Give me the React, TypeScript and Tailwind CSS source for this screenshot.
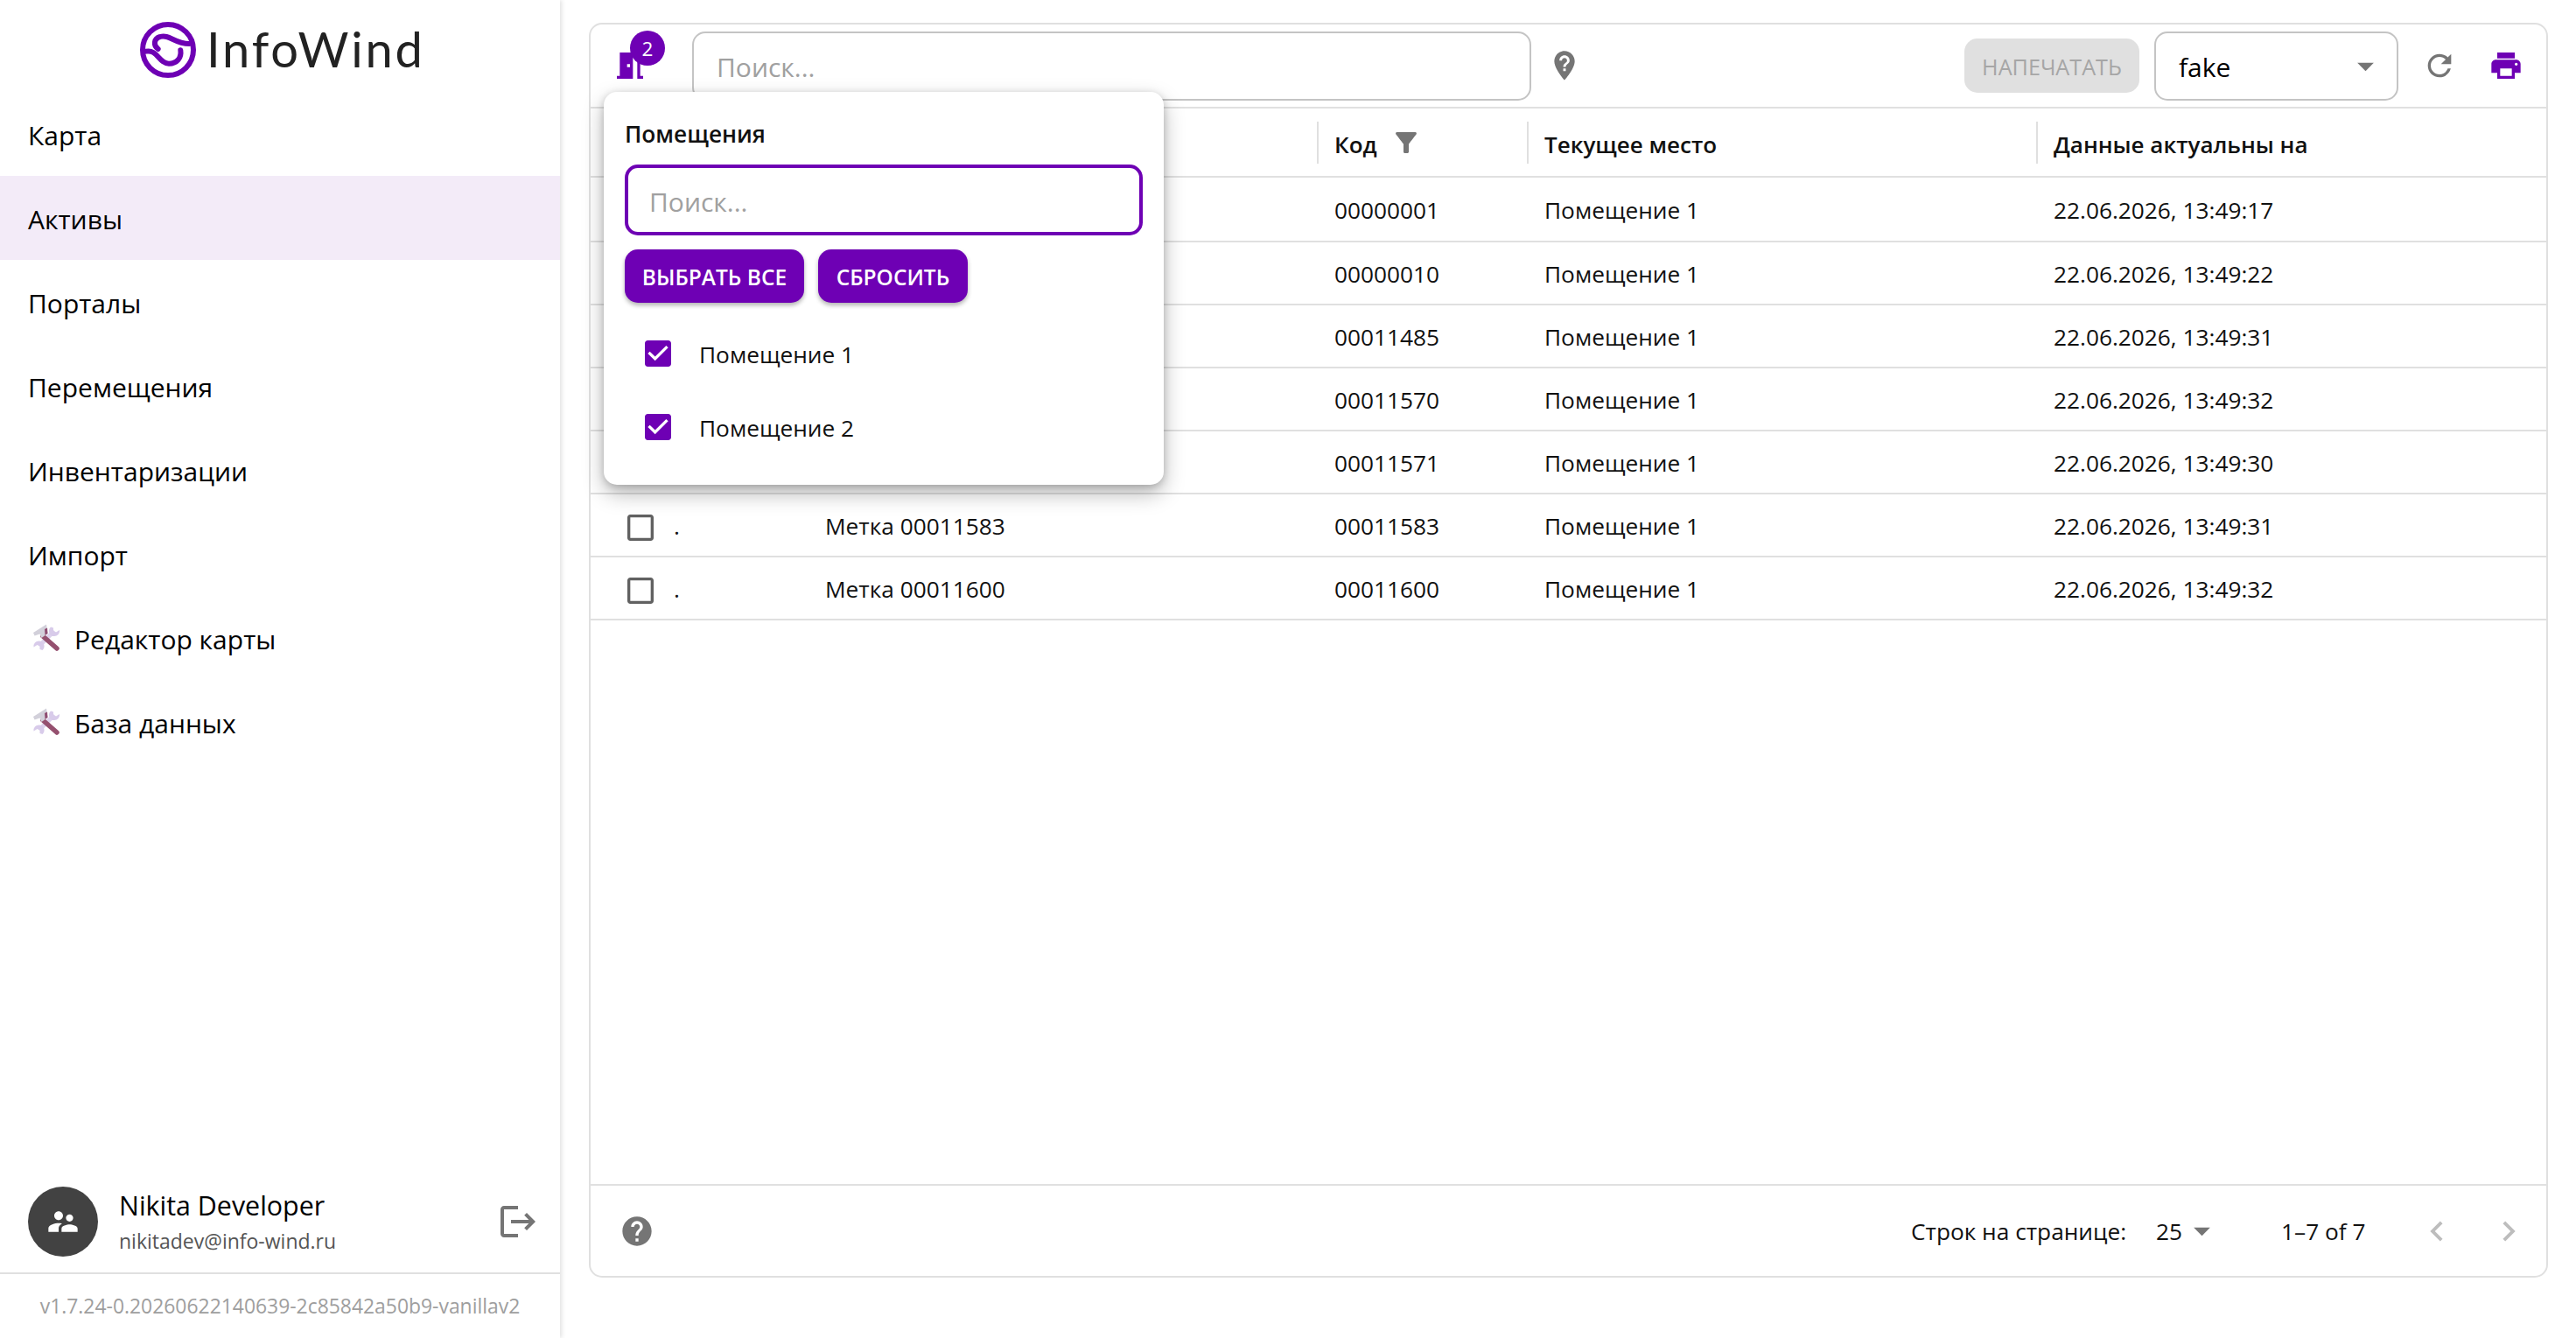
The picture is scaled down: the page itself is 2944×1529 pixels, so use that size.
import React from 'react';

const PURPLE = '#6e00b4';

const Icon = ({ d, size = 40, color = '#757575' }: { d: string; size?: number; color?: string }) => (
  <svg width={size} height={size} viewBox="0 0 24 24" fill={color} className="shrink-0">
    <path d={d} />
  </svg>
);

const paths = {
  door: 'M14 6v15H3v-2h2V3h9v1h5v15h2v2h-4V6h-3zm-4 5v2h2v-2h-2z',
  pin: 'M12 2C8.14 2 5 5.14 5 9c0 5.25 7 13 7 13s7-7.75 7-13c0-3.86-3.14-7-7-7zm.88 13.75h-1.75V14h1.75v1.75zm0-2.87h-1.75c0-2.84 2.62-2.62 2.62-4.38 0-.96-.79-1.75-1.75-1.75s-1.75.79-1.75 1.75H8.5C8.5 6.57 10.07 5 12 5s3.5 1.57 3.5 3.5c0 2.19-2.62 2.41-2.62 4.38z',
  refresh: 'M17.65 6.35C16.2 4.9 14.21 4 12 4c-4.42 0-7.99 3.58-7.99 8s3.57 8 7.99 8c3.73 0 6.84-2.55 7.73-6h-2.08c-.82 2.33-3.04 4-5.65 4-3.31 0-6-2.69-6-6s2.69-6 6-6c1.66 0 3.14.69 4.22 1.78L13 11h7V4l-2.35 2.35z',
  print: 'M19 8H5c-1.66 0-3 1.34-3 3v6h4v4h12v-4h4v-6c0-1.66-1.34-3-3-3zm-3 11H8v-5h8v5zm3-7c-.55 0-1-.45-1-1s.45-1 1-1 1 .45 1 1-.45 1-1 1zm-1-9H6v4h12V3z',
  filter: 'M4.25 5.61C6.27 8.2 10 13 10 13v6c0 .55.45 1 1 1h2c.55 0 1-.45 1-1v-6s3.72-4.8 5.74-7.39c.51-.66.04-1.61-.79-1.61H5.04c-.83 0-1.3.95-.79 1.61z',
  help: 'M12 2C6.48 2 2 6.48 2 12s4.48 10 10 10 10-4.48 10-10S17.52 2 12 2zm1 17h-2v-2h2v2zm2.07-7.75l-.9.92C13.45 12.9 13 13.5 13 15h-2v-.5c0-1.1.45-2.1 1.17-2.83l1.24-1.26c.37-.36.59-.86.59-1.41 0-1.1-.9-2-2-2s-2 .9-2 2H8c0-2.21 1.79-4 4-4s4 1.79 4 4c0 .88-.36 1.68-.93 2.25z',
  logout: 'M17 7l-1.41 1.41L18.17 11H8v2h10.17l-2.58 2.58L17 17l5-5zM4 5h8V3H4c-1.1 0-2 .9-2 2v14c0 1.1.9 2 2 2h8v-2H4V5z',
  people: 'M16.5 12c1.38 0 2.49-1.12 2.49-2.5S17.88 7 16.5 7C15.12 7 14 8.12 14 9.5s1.12 2.5 2.5 2.5zM9 11c1.66 0 2.99-1.34 2.99-3S10.66 5 9 5C7.34 5 6 6.34 6 8s1.34 3 3 3zm7.5 3c-1.83 0-5.5.92-5.5 2.75V19h11v-2.25c0-1.83-3.67-2.75-5.5-2.75zM9 13c-2.33 0-7 1.17-7 3.5V19h7v-2.25c0-.85.33-2.34 2.37-3.47C10.5 13.1 9.66 13 9 13z',
  drop: 'M7 10l5 5 5-5z',
  left: 'M15.41 7.41 14 6l-6 6 6 6 1.41-1.41L10.83 12z',
  right: 'M10 6 8.59 7.41 13.17 12l-4.58 4.59L10 18l6-6z',
  checked: 'M19 3H5c-1.11 0-2 .9-2 2v14c0 1.1.89 2 2 2h14c1.1 0 2-.9 2-2V5c0-1.1-.9-2-2-2zm-9 14l-5-5 1.41-1.41L10 14.17l7.59-7.59L19 8l-9 9z',
  unchecked: 'M19 5v14H5V5h14m0-2H5c-1.1 0-2 .9-2 2v14c0 1.1.9 2 2 2h14c1.1 0 2-.9 2-2V5c0-1.1-.9-2-2-2z',
};

const LogoMark = () => (
  <svg width="66" height="66" viewBox="0 0 198 198" fill="none" stroke={PURPLE} strokeWidth="18" className="shrink-0">
    <circle cx="99" cy="99" r="87" />
    <path d="M65 96 C48 84 50 60 72 54 C104 44 120 78 172 78" strokeLinecap="round" />
    <path d="M24 104 C62 96 68 146 102 146 C130 146 146 126 142 100" strokeLinecap="round" />
  </svg>
);

const Tools = () => (
  <svg width="32" height="32" viewBox="0 0 32 32" className="shrink-0">
    <path d="M25 8 L8 25" stroke="#ddd2ec" strokeWidth="5" />
    <path d="M21 3.5 a6 6 0 0 0 4 10.5 a6 6 0 0 0 6 -7 l-4 2.5 -3-1.5 0-3.5 z" fill="#d8cbea" />
    <path d="M11.5 30 a6 6 0 0 0 -4-10.5 a6 6 0 0 0 -6 7 l4-2.5 3 1.5 0 3.5 z" fill="#d8cbea" />
    <path d="M12 14 L28 28" stroke="#95506f" strokeWidth="5.5" strokeLinecap="round" />
    <path d="M1 10 L16 0.5 L17.5 11 L10.5 16 L8.5 11.5 L2.5 13.5 z" fill="#d2d0da" />
    <path d="M14 6 L17 4.5 L17.5 11 L14.5 13 z" fill="#8f4d72" />
  </svg>
);

const nav = [
  { label: 'Карта' },
  { label: 'Активы', active: true },
  { label: 'Порталы' },
  { label: 'Перемещения' },
  { label: 'Инвентаризации' },
  { label: 'Импорт' },
  { label: 'Редактор карты', tool: true },
  { label: 'База данных', tool: true },
];

// first five rows sit under the open popover, only their right part can be seen
const rows = [
  { code: '00000001', date: '22.06.2026, 13:49:17', covered: true },
  { code: '00000010', date: '22.06.2026, 13:49:22', covered: true },
  { code: '00011485', date: '22.06.2026, 13:49:31', covered: true },
  { code: '00011570', date: '22.06.2026, 13:49:32', covered: true },
  { code: '00011571', date: '22.06.2026, 13:49:30', covered: true },
  { code: '00011583', date: '22.06.2026, 13:49:31' },
  { code: '00011600', date: '22.06.2026, 13:49:32' },
];

const gridCols = 'grid grid-cols-[95px_173px_562px_240px_582px_1fr] items-center';

const Sidebar = () => (
  <aside className="flex h-full w-[640px] shrink-0 flex-col bg-white shadow-[2px_0_5px_rgba(0,0,0,0.12)]">
    <div className="flex h-[105px] items-start gap-[11px] pt-6 pl-[159px]">
      <LogoMark />
      <span className="mt-[1px] font-['Lato',sans-serif] text-[56px] leading-[62px] tracking-[2.8px] text-[#222]">InfoWind</span>
    </div>
    <nav className="flex-1">
      {nav.map((item) => (
        <div key={item.label} className={`flex h-24 items-center gap-4 pl-8 text-[30px] text-black ${item.active ? 'bg-[#f3ebf8]' : ''}`}>
          {item.tool && <span className="ml-[5px]"><Tools /></span>}
          <span className="pt-[3px]">{item.label}</span>
        </div>
      ))}
    </nav>
    <div className="flex h-[118px] items-center border-b-2 border-[#e0e0e0] pl-8 pr-6">
      <div className="flex h-20 w-20 items-center justify-center rounded-full bg-[#424242]">
        <Icon d={paths.people} color="#fff" />
      </div>
      <div className="ml-6 flex-1">
        <div className="text-[30.4px] leading-[44px] text-black">Nikita Developer</div>
        <div className="text-[23px] leading-[36px] text-[#555]">nikitadev@info-wind.ru</div>
      </div>
      <Icon d={paths.logout} size={48} color="#757575" />
    </div>
    <div className="flex h-[73px] items-center justify-center pt-[2px] text-[22.9px] text-[#9e9e9e]">v1.7.24-0.20260622140639-2c85842a50b9-vanillav2</div>
  </aside>
);

const RoomsPopover = () => (
  <div className="absolute top-[77px] left-[15px] z-10 h-[449px] w-[640px] rounded-[15px] bg-white px-6 pt-[30px] shadow-[0_10px_24px_rgba(0,0,0,0.28),0_2px_8px_rgba(0,0,0,0.18)]">
    <div className="text-[26.25px] leading-9 font-semibold text-[#111]">Помещения</div>
    <input
      placeholder="Поиск..."
      className="mt-[17px] h-[81px] w-full rounded-[15px] border-4 border-[#6e00b4] px-6 pt-1 text-[30px] outline-none placeholder:text-[#a0a0a0]"
    />
    <div className="mt-4 flex gap-4">
      <button className="h-[61px] w-[205px] rounded-[15px] bg-[#6e00b4] pt-[3px] text-[24.5px] font-semibold text-white shadow-[0_3px_5px_rgba(0,0,0,0.3)]">ВЫБРАТЬ ВСЕ</button>
      <button className="h-[61px] w-[171px] rounded-[15px] bg-[#6e00b4] pt-[3px] text-[24.5px] font-semibold text-white shadow-[0_3px_5px_rgba(0,0,0,0.3)]">СБРОСИТЬ</button>
    </div>
    <div className="mt-4">
      {['Помещение 1', 'Помещение 2'].map((room) => (
        <div key={room} className="flex h-[84px] items-center gap-[27px] pl-[18px] text-[26.25px] text-[#111]">
          <Icon d={paths.checked} color={PURPLE} />
          <span className="pt-[3px]">{room}</span>
        </div>
      ))}
    </div>
  </div>
);

const Toolbar = () => (
  <div className="flex h-[96px] shrink-0 items-center border-b-2 border-[#e0e0e0] pl-[25px] pr-[26px]">
    <div className="relative h-10 w-10 shrink-0">
      <Icon d={paths.door} color={PURPLE} />
      <span className="absolute -top-5 left-5 flex h-10 w-10 items-center justify-center rounded-full bg-[#6e00b4] pt-[2px] text-[22.5px] font-medium text-white">2</span>
    </div>
    <input
      placeholder="Поиск..."
      className="ml-[51px] h-[79px] w-[959px] rounded-[15px] border-2 border-[#c4c4c4] pr-[27px] pl-[26px] pt-[3px] text-[30px] outline-none placeholder:text-[#a0a0a0]"
    />
    <span className="ml-[18px]"><Icon d={paths.pin} /></span>
    <button className="ml-auto h-[62px] w-[200px] rounded-[15px] bg-[#e0e0e0] pt-[3px] text-[25.2px] font-medium text-[#a6a6a6]">НАПЕЧАТАТЬ</button>
    <div className="ml-[17px] flex h-[79px] w-[279px] items-center justify-between rounded-[15px] border-2 border-[#c4c4c4] pl-[26px] pr-[13px] text-[30px] text-black">
      <span className="pt-[3px]">fake</span>
      <Icon d={paths.drop} size={45} />
    </div>
    <span className="ml-[27px]"><Icon d={paths.refresh} /></span>
    <span className="ml-9"><Icon d={paths.print} color={PURPLE} /></span>
  </div>
);

const HeaderCell = ({ children }: { children?: React.ReactNode }) => (
  <div className="flex h-12 items-center border-l-2 border-[#e0e0e0] pl-[18px] text-[26px] font-semibold text-[#111]">{children}</div>
);

const AssetsTable = () => (
  <div className="text-[26.25px] text-[#111]">
    <div className={`${gridCols} h-[79px] border-b-2 border-[#e0e0e0]`}>
      <div />
      <div />
      <div />
      <HeaderCell>
        <span className="pt-[5px]">Код</span>
        <span className="ml-[15px]"><Icon d={paths.filter} size={36} /></span>
      </HeaderCell>
      <HeaderCell><span className="pt-[5px]">Текущее место</span></HeaderCell>
      <HeaderCell><span className="pt-[5px]">Данные актуальны на</span></HeaderCell>
    </div>
    {rows.map((row, i) => (
      <div key={row.code} className={`${gridCols} border-b-2 border-[#e0e0e0] ${i === 0 ? 'h-[74px]' : 'h-[72px]'}`}>
        <div className="pt-[6px] pl-[37px]"><Icon d={paths.unchecked} color="#616161" /></div>
        <div className="pt-[3px]">{row.covered ? '' : '.'}</div>
        <div className="pt-[3px]">{row.covered ? '' : `Метка ${row.code}`}</div>
        <div className="pt-[3px] pl-5">{row.code}</div>
        <div className="pt-[3px] pl-5">Помещение 1</div>
        <div className="pt-[3px] pl-5">{row.date}</div>
      </div>
    ))}
  </div>
);

const Pagination = () => (
  <div className="flex h-[105px] shrink-0 items-center border-t-2 border-[#e0e0e0] pl-[33px] pr-5 text-[26.25px] text-[#111]">
    <Icon d={paths.help} />
    <div className="ml-auto flex items-center">
      <span className="w-[280px] pt-[3px]">Строк на странице:</span>
      <div className="flex w-[143px] items-center">
        <span className="pt-[3px]">25</span>
        <Icon d={paths.drop} size={45} />
      </div>
      <span className="w-[155px] pt-[3px]">1–7 of 7</span>
      <Icon d={paths.left} size={46} color="#bdbdbd" />
      <span className="ml-9"><Icon d={paths.right} size={46} color="#bdbdbd" /></span>
    </div>
  </div>
);

export default function App() {
  return (
    <div className="flex h-[1529px] w-full overflow-hidden bg-white font-['Open_Sans',sans-serif]">
      <Sidebar />
      <main className="flex-1 pt-[26px] pr-8 pb-[69px] pl-[33px]">
        <div className="relative flex h-full flex-col rounded-[15px] border-2 border-[#e0e0e0]">
          <Toolbar />
          <div className="flex-1"><AssetsTable /></div>
          <Pagination />
          <RoomsPopover />
        </div>
      </main>
    </div>
  );
}
